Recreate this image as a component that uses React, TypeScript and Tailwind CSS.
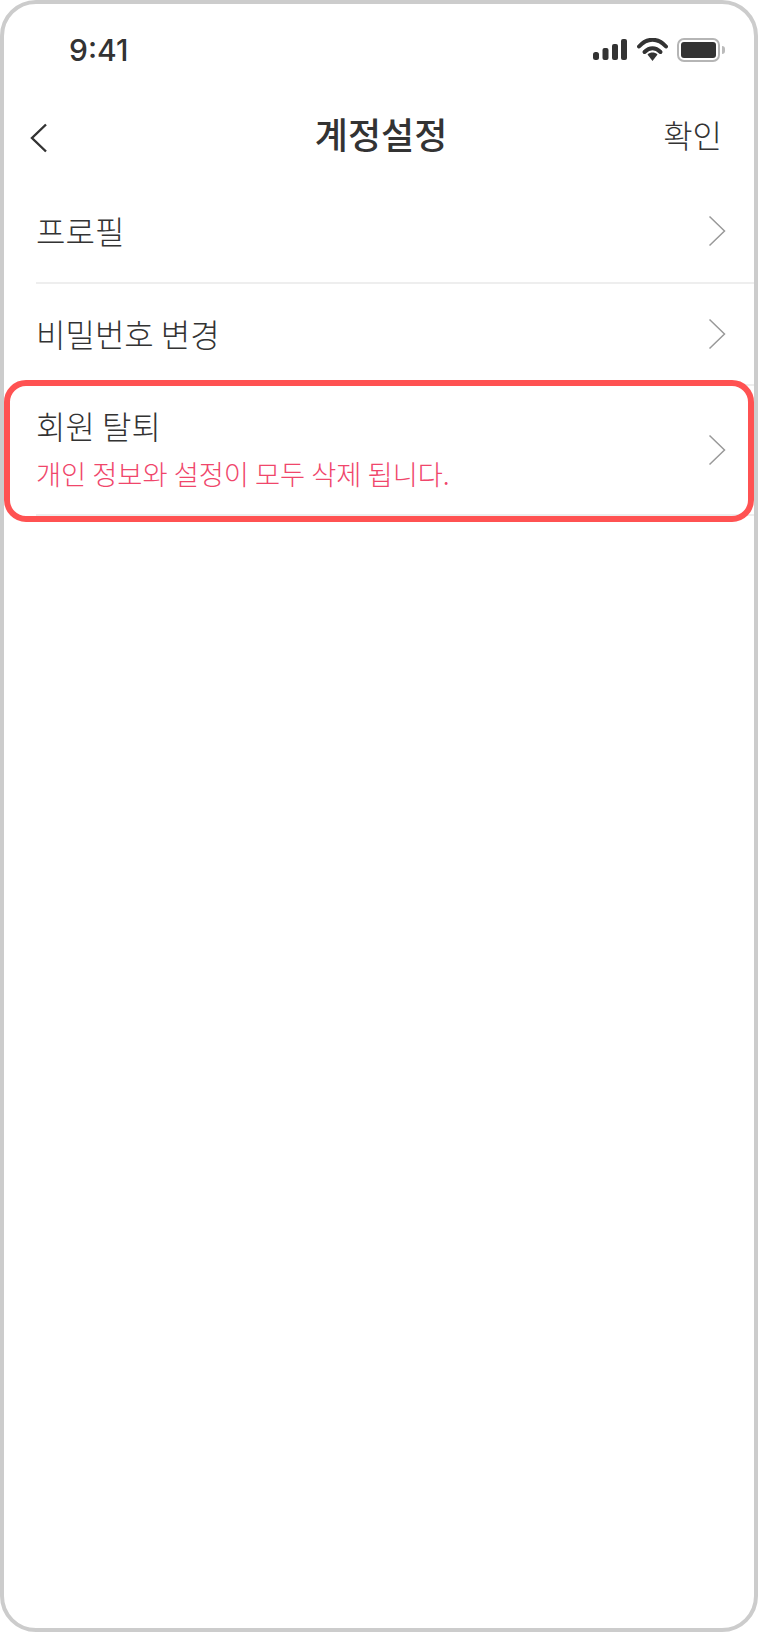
const ko = "font-['Noto_Sans_CJK_KR','Noto_Sans',sans-serif]";

function Chevron() {
  return (
    <svg width="18" height="32" viewBox="0 0 18 32" fill="none" className="shrink-0">
      <path d="M1.5 1.5 16.5 16 1.5 30.5" stroke="#999" strokeWidth="1.5" />
    </svg>
  );
}

function StatusIcons() {
  return (
    <div className="flex items-center">
      <svg width="34" height="22" viewBox="0 0 34 22" fill="#333">
        <rect x="0" y="13" width="6" height="8" rx="2.5" />
        <rect x="9.5" y="9" width="6" height="12" rx="2" />
        <rect x="19" y="5" width="6" height="16" rx="2" />
        <rect x="28" y="0" width="6" height="21" rx="2" />
      </svg>
      <svg width="31" height="24" viewBox="0 0 31 24" fill="none" className="ml-[10px]">
        <path d="M2 8.5C10-.5 21-.5 29 8.5" stroke="#333" strokeWidth="4" strokeLinecap="round" />
        <path d="M7.5 14c5-5 11-5 16 0" stroke="#333" strokeWidth="4" strokeLinecap="round" />
        <path d="M10.5 16.5c3-2.6 7-2.6 10 0L15.5 23z" fill="#333" />
      </svg>
      <div className="ml-[9px] flex items-center">
        <div className="flex h-[24px] w-[43px] rounded-[7px] border-2 border-[#b5b5b5] p-[2px]">
          <div className="flex-1 rounded-[3px] bg-[#333]" />
        </div>
        <div className="ml-[2px] h-[8px] w-[3px] rounded-r-full bg-[#bbb]" />
      </div>
    </div>
  );
}

function Row({ title, desc, height }: { title: string; desc?: string; height: string }) {
  return (
    <div className={`flex items-center justify-between border-b-2 border-[#eeeeee] pr-[28px] ${height}`}>
      <div className={desc ? "pb-[7px]" : "pb-[2px]"}>
        <p className="text-[32px] leading-[46px] font-light text-[#333]">{title}</p>
        {desc && <p className="mt-[6px] text-[27.3px] leading-[38px] font-light text-[#f0466b]">{desc}</p>}
      </div>
      <Chevron />
    </div>
  );
}

export default function App() {
  return (
    <div className={`h-[1632px] w-[758px] overflow-hidden rounded-[36px] border-4 border-[#cccccc] bg-white ${ko}`}>
      <div className="flex h-[92px] items-center justify-between pr-[29px] pl-[65px]">
        <span className="font-['Inter',sans-serif] text-[30px] font-medium text-[#333]">9:41</span>
        <StatusIcons />
      </div>
      <div className="flex h-[84px] items-center justify-between pr-[32px] pl-[26px]">
        <div className="flex-1">
          <svg width="18" height="30" viewBox="0 0 18 30" fill="none">
            <path d="M16 1.5 2 15l14 13.5" stroke="#333" strokeWidth="2.4" />
          </svg>
        </div>
        <h1 className="mb-[10px] pl-[10px] text-[36px] font-medium text-[#333]">계정설정</h1>
        <span className="mb-[8px] flex-1 text-right text-[32px] font-light text-[#333]">확인</span>
      </div>
      <div className="pl-[32px]">
        <Row title="프로필" height="h-[104px]" />
        <Row title="비밀번호 변경" height="h-[102px]" />
        <div className="relative">
          <Row title="회원 탈퇴" desc="개인 정보와 설정이 모두 삭제 됩니다." height="h-[130px]" />
          <div className="absolute -top-[6px] -right-0 -bottom-[6px] -left-[32px] rounded-[22px] border-[6px] border-[#ff5252]" />
        </div>
      </div>
    </div>
  );
}
